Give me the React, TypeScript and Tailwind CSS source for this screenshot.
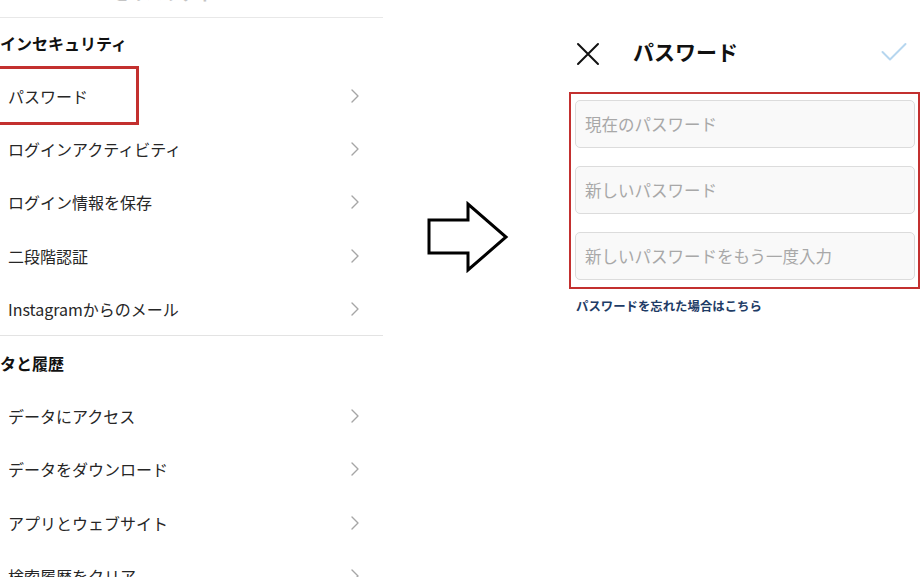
import React from "react";

const font = { fontFamily: '"Noto Sans CJK JP", "Noto Sans", sans-serif' };

function Chevron() {
  return (
    <svg width="8" height="14" viewBox="0 0 8 14" className="mr-[24px]">
      <path d="M1 1 L7 7 L1 13" fill="none" stroke="#a6a6a6" strokeWidth="1.4" strokeLinecap="round" strokeLinejoin="round" />
    </svg>
  );
}

function Row({ label, boxed }: { label: string; boxed?: boolean }) {
  return (
    <div className="relative flex h-[53.3px] items-center justify-between">
      <span className="pl-[8px] text-[16px] text-[#262626]">{label}</span>
      <Chevron />
      {boxed && (
        <div className="absolute left-[-10px] top-[-3px] h-[59px] w-[149px] border-[3px] border-[#c3302f]" />
      )}
    </div>
  );
}

function Heading({ label, h }: { label: string; h: string }) {
  return (
    <div className={`flex items-center ${h}`}>
      <span className="text-[16px] font-bold text-[#111]">{label}</span>
    </div>
  );
}

function PwInput({ placeholder }: { placeholder: string }) {
  return (
    <input
      type="password"
      placeholder={placeholder}
      className="h-[48px] w-full rounded-[5px] border border-[#dcdcdc] bg-[#f9f9f9] pl-[9px] text-[16.5px] placeholder:text-[#a8a8a8] focus:outline-none"
    />
  );
}

export default function App() {
  return (
    <div className="flex h-[577px] w-[921px] items-start overflow-hidden bg-white" style={font}>
      {/* settings list */}
      <div className="w-[383px] shrink-0">
        <div className="h-[17px] overflow-hidden">
          <div className="-mt-[20px] pl-[112px] text-[17px] font-semibold text-[#c4c4c4]">セキュリティ</div>
        </div>
        <div className="h-px bg-[#e8e8e8]" />
        <div className="-mt-px">
          <Heading label="インセキュリティ" h="h-[52px]" />
        </div>
        <Row label="パスワード" boxed />
        <Row label="ログインアクティビティ" />
        <Row label="ログイン情報を保存" />
        <Row label="二段階認証" />
        <Row label="Instagramからのメール" />
        <div className="h-px bg-[#e3e3e3]" />
        <Heading label="タと履歴" h="h-[53px]" />
        <Row label="データにアクセス" />
        <Row label="データをダウンロード" />
        <Row label="アプリとウェブサイト" />
        <Row label="検索履歴をクリア" />
      </div>

      {/* arrow */}
      <svg width="84" height="72" viewBox="0 0 84 72" className="ml-[44px] mt-[201px] shrink-0">
        <path
          d="M2 19 H41 V3 L79 36 L41 69 V52 H2 Z"
          fill="#fff"
          stroke="#000"
          strokeWidth="3"
          strokeLinejoin="miter"
        />
      </svg>

      {/* password screen */}
      <div className="ml-[58px] w-[351px] shrink-0">
        <div className="mt-[32px] flex h-[44px] items-center">
          <svg width="24" height="24" viewBox="0 0 24 24" className="ml-[7px]">
            <path d="M2 2 L22 22 M22 2 L2 22" stroke="#111" strokeWidth="2" strokeLinecap="round" />
          </svg>
          <span className="ml-[33px] -mt-[4px] text-[21px] font-semibold text-[#111]">パスワード</span>
          <svg width="26" height="20" viewBox="0 0 26 20" className="ml-auto mr-[13px] -mt-[4px]">
            <path d="M1.5 10 L9 17.5 L24.5 2" fill="none" stroke="#b6d6ef" strokeWidth="2" strokeLinecap="round" strokeLinejoin="round" />
          </svg>
        </div>
        <div className="mt-[16px] flex flex-col gap-[18px] border-2 border-[#c3302f] pb-[7px] pl-[4px] pr-[3px] pt-[6px]">
          <PwInput placeholder="現在のパスワード" />
          <PwInput placeholder="新しいパスワード" />
          <PwInput placeholder="新しいパスワードをもう一度入力" />
        </div>
        <div className="mt-[8px] pl-[7px] text-[12.4px] font-bold text-[#1e3c66]">パスワードを忘れた場合はこちら</div>
      </div>
    </div>
  );
}
